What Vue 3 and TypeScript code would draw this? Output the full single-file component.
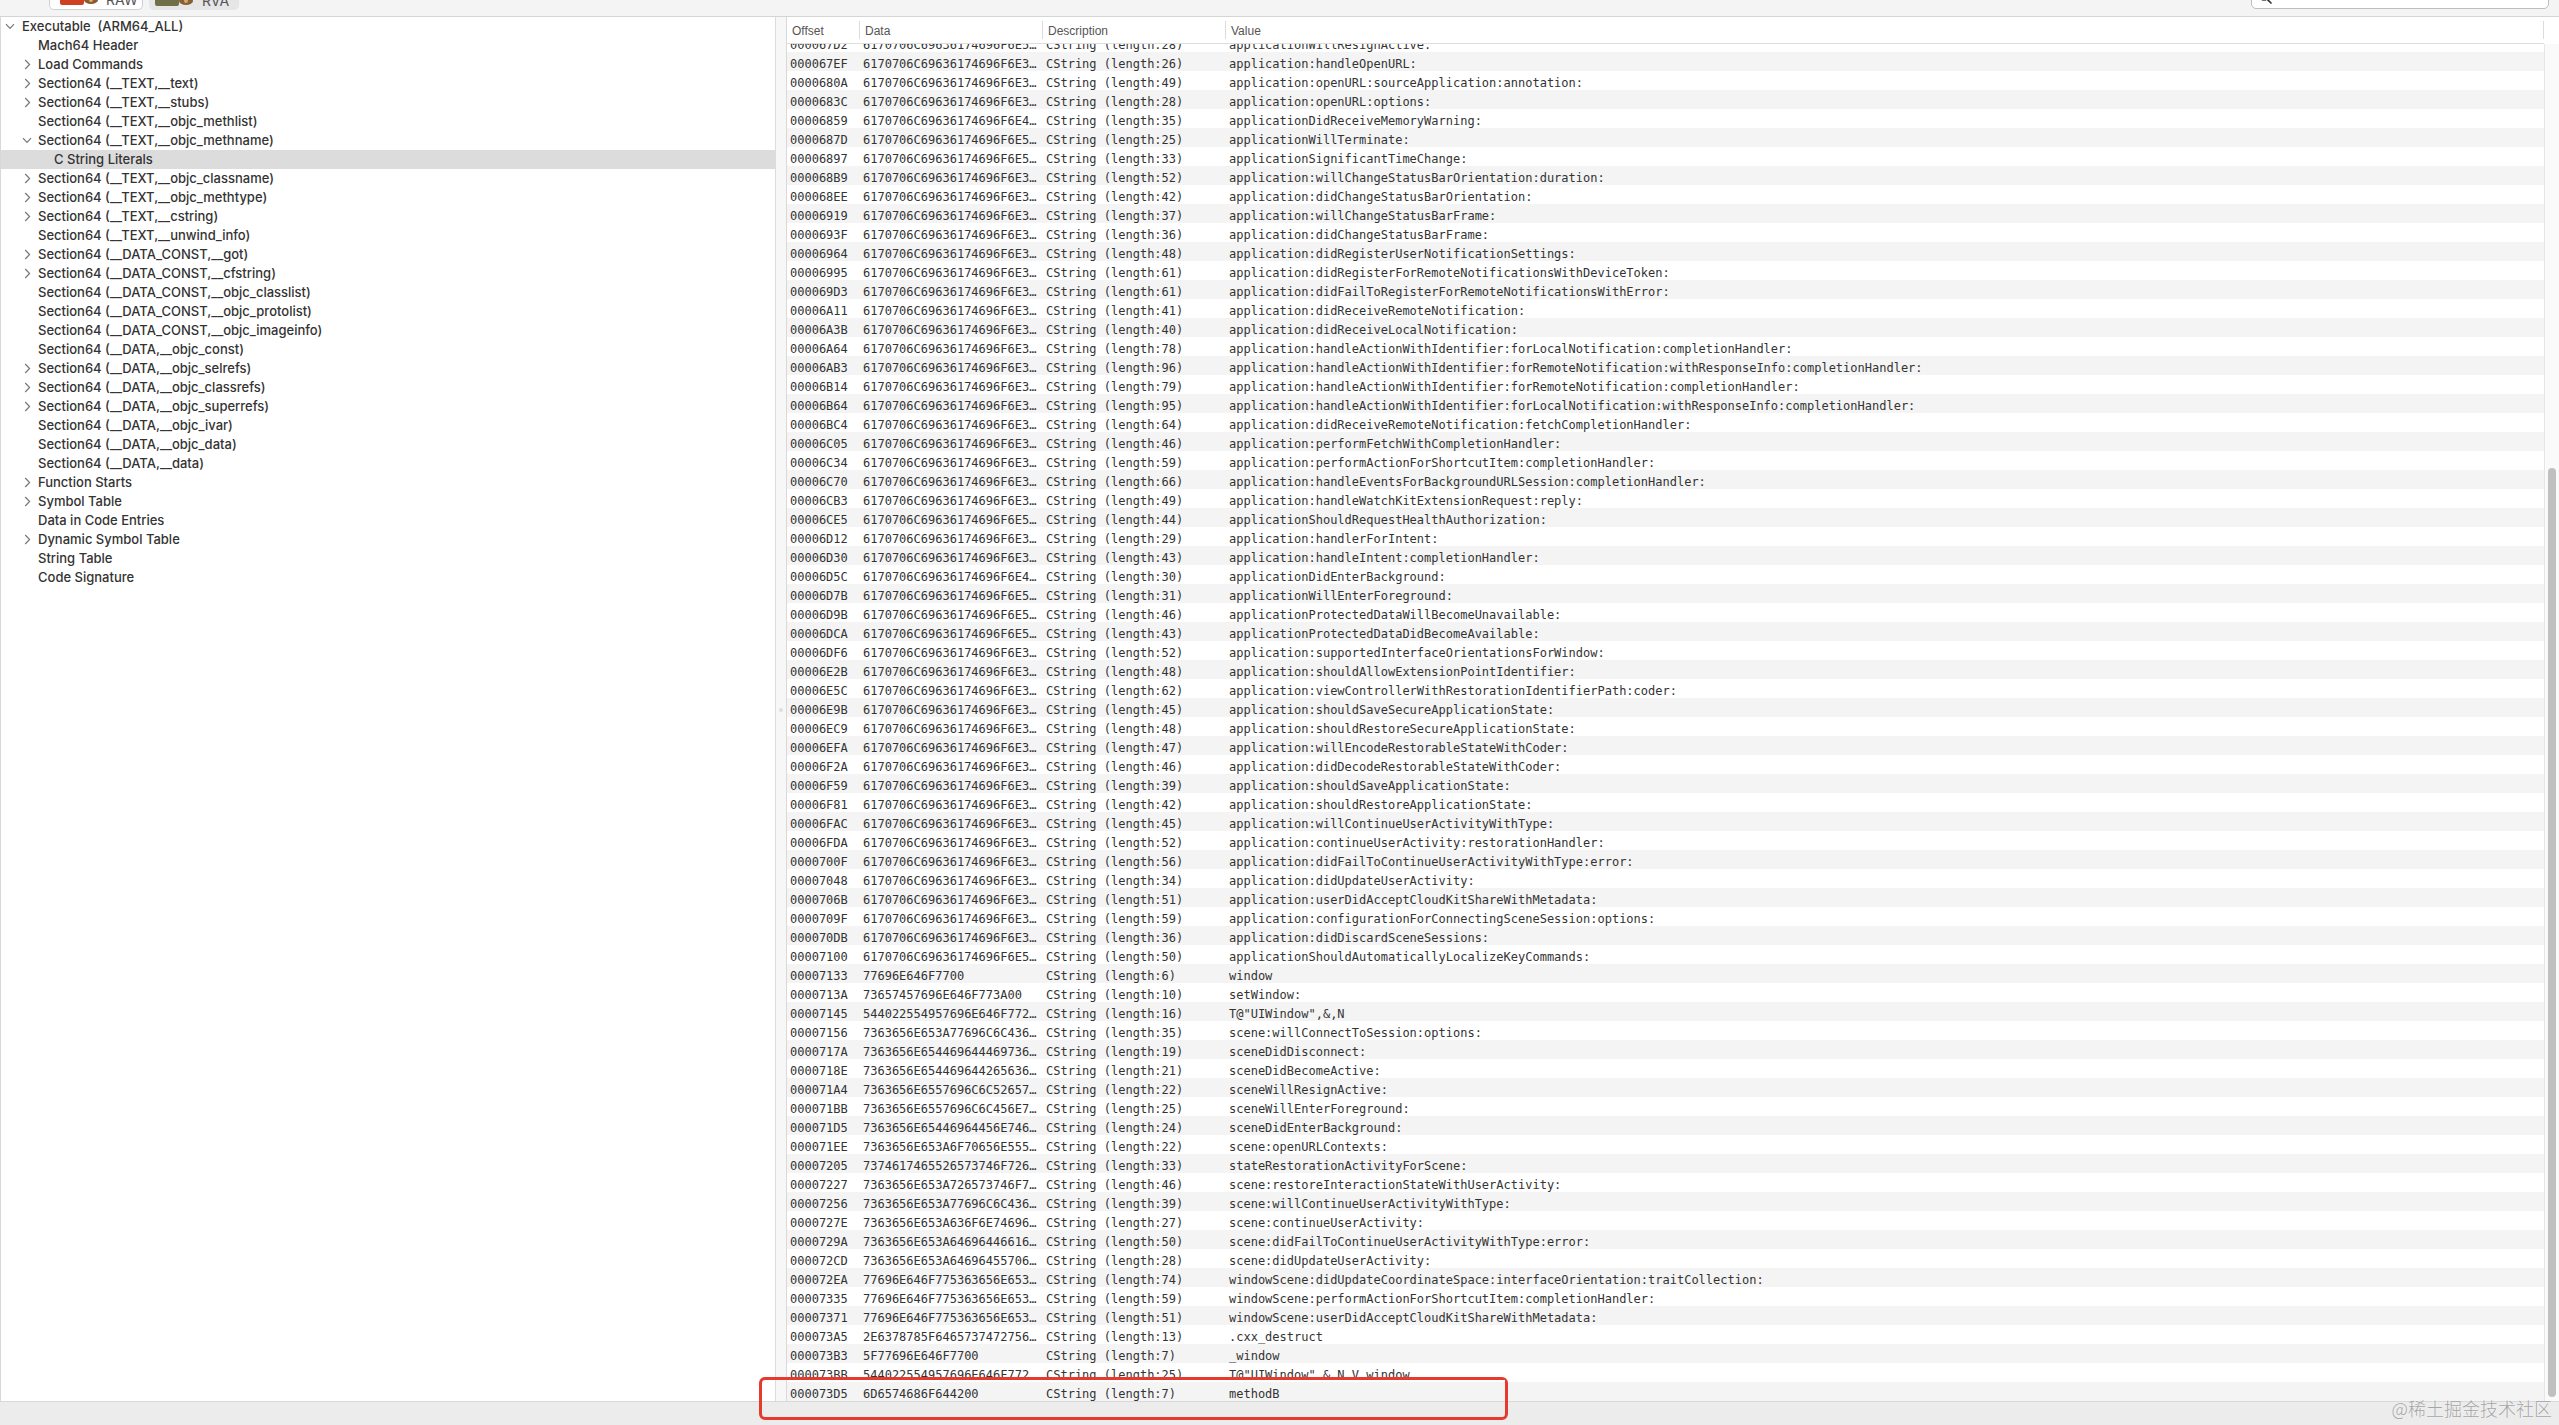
<script setup lang="ts">
interface TreeRow { label: string; depth: number; arrow?: 'right' | 'down'; active?: boolean }

const tree: TreeRow[] = [
  { label: 'Executable  (ARM64_ALL)', depth: 0, arrow: 'down' },
  { label: 'Mach64 Header', depth: 1 },
  { label: 'Load Commands', depth: 1, arrow: 'right' },
  { label: 'Section64 (__TEXT,__text)', depth: 1, arrow: 'right' },
  { label: 'Section64 (__TEXT,__stubs)', depth: 1, arrow: 'right' },
  { label: 'Section64 (__TEXT,__objc_methlist)', depth: 1 },
  { label: 'Section64 (__TEXT,__objc_methname)', depth: 1, arrow: 'down' },
  { label: 'C String Literals', depth: 2, active: true },
  { label: 'Section64 (__TEXT,__objc_classname)', depth: 1, arrow: 'right' },
  { label: 'Section64 (__TEXT,__objc_methtype)', depth: 1, arrow: 'right' },
  { label: 'Section64 (__TEXT,__cstring)', depth: 1, arrow: 'right' },
  { label: 'Section64 (__TEXT,__unwind_info)', depth: 1 },
  { label: 'Section64 (__DATA_CONST,__got)', depth: 1, arrow: 'right' },
  { label: 'Section64 (__DATA_CONST,__cfstring)', depth: 1, arrow: 'right' },
  { label: 'Section64 (__DATA_CONST,__objc_classlist)', depth: 1 },
  { label: 'Section64 (__DATA_CONST,__objc_protolist)', depth: 1 },
  { label: 'Section64 (__DATA_CONST,__objc_imageinfo)', depth: 1 },
  { label: 'Section64 (__DATA,__objc_const)', depth: 1 },
  { label: 'Section64 (__DATA,__objc_selrefs)', depth: 1, arrow: 'right' },
  { label: 'Section64 (__DATA,__objc_classrefs)', depth: 1, arrow: 'right' },
  { label: 'Section64 (__DATA,__objc_superrefs)', depth: 1, arrow: 'right' },
  { label: 'Section64 (__DATA,__objc_ivar)', depth: 1 },
  { label: 'Section64 (__DATA,__objc_data)', depth: 1 },
  { label: 'Section64 (__DATA,__data)', depth: 1 },
  { label: 'Function Starts', depth: 1, arrow: 'right' },
  { label: 'Symbol Table', depth: 1, arrow: 'right' },
  { label: 'Data in Code Entries', depth: 1 },
  { label: 'Dynamic Symbol Table', depth: 1, arrow: 'right' },
  { label: 'String Table', depth: 1 },
  { label: 'Code Signature', depth: 1 },
]

const values: string[] = [
  'applicationWillResignActive:',
  'application:handleOpenURL:',
  'application:openURL:sourceApplication:annotation:',
  'application:openURL:options:',
  'applicationDidReceiveMemoryWarning:',
  'applicationWillTerminate:',
  'applicationSignificantTimeChange:',
  'application:willChangeStatusBarOrientation:duration:',
  'application:didChangeStatusBarOrientation:',
  'application:willChangeStatusBarFrame:',
  'application:didChangeStatusBarFrame:',
  'application:didRegisterUserNotificationSettings:',
  'application:didRegisterForRemoteNotificationsWithDeviceToken:',
  'application:didFailToRegisterForRemoteNotificationsWithError:',
  'application:didReceiveRemoteNotification:',
  'application:didReceiveLocalNotification:',
  'application:handleActionWithIdentifier:forLocalNotification:completionHandler:',
  'application:handleActionWithIdentifier:forRemoteNotification:withResponseInfo:completionHandler:',
  'application:handleActionWithIdentifier:forRemoteNotification:completionHandler:',
  'application:handleActionWithIdentifier:forLocalNotification:withResponseInfo:completionHandler:',
  'application:didReceiveRemoteNotification:fetchCompletionHandler:',
  'application:performFetchWithCompletionHandler:',
  'application:performActionForShortcutItem:completionHandler:',
  'application:handleEventsForBackgroundURLSession:completionHandler:',
  'application:handleWatchKitExtensionRequest:reply:',
  'applicationShouldRequestHealthAuthorization:',
  'application:handlerForIntent:',
  'application:handleIntent:completionHandler:',
  'applicationDidEnterBackground:',
  'applicationWillEnterForeground:',
  'applicationProtectedDataWillBecomeUnavailable:',
  'applicationProtectedDataDidBecomeAvailable:',
  'application:supportedInterfaceOrientationsForWindow:',
  'application:shouldAllowExtensionPointIdentifier:',
  'application:viewControllerWithRestorationIdentifierPath:coder:',
  'application:shouldSaveSecureApplicationState:',
  'application:shouldRestoreSecureApplicationState:',
  'application:willEncodeRestorableStateWithCoder:',
  'application:didDecodeRestorableStateWithCoder:',
  'application:shouldSaveApplicationState:',
  'application:shouldRestoreApplicationState:',
  'application:willContinueUserActivityWithType:',
  'application:continueUserActivity:restorationHandler:',
  'application:didFailToContinueUserActivityWithType:error:',
  'application:didUpdateUserActivity:',
  'application:userDidAcceptCloudKitShareWithMetadata:',
  'application:configurationForConnectingSceneSession:options:',
  'application:didDiscardSceneSessions:',
  'applicationShouldAutomaticallyLocalizeKeyCommands:',
  'window',
  'setWindow:',
  'T@"UIWindow",&,N',
  'scene:willConnectToSession:options:',
  'sceneDidDisconnect:',
  'sceneDidBecomeActive:',
  'sceneWillResignActive:',
  'sceneWillEnterForeground:',
  'sceneDidEnterBackground:',
  'scene:openURLContexts:',
  'stateRestorationActivityForScene:',
  'scene:restoreInteractionStateWithUserActivity:',
  'scene:willContinueUserActivityWithType:',
  'scene:continueUserActivity:',
  'scene:didFailToContinueUserActivityWithType:error:',
  'scene:didUpdateUserActivity:',
  'windowScene:didUpdateCoordinateSpace:interfaceOrientation:traitCollection:',
  'windowScene:performActionForShortcutItem:completionHandler:',
  'windowScene:userDidAcceptCloudKitShareWithMetadata:',
  '.cxx_destruct',
  '_window',
  'T@"UIWindow",&,N,V_window',
  'methodB',
]

function hexOf(s: string): string {
  let out = ''
  for (let i = 0; i < s.length; i++) out += s.charCodeAt(i).toString(16).toUpperCase().padStart(2, '0')
  out += '00'
  return out.length > 24 ? out.slice(0, 23) + '\u2026' : out
}

let cursor = 0x67d2
const rows = values.map((value) => {
  const offset = cursor.toString(16).toUpperCase().padStart(8, '0')
  cursor += value.length + 1
  return { offset, data: hexOf(value), desc: `CString (length:${value.length})`, value }
})

const columns = ['Offset', 'Data', 'Description', 'Value']
</script>

<template>
  <div class="app">
    <header class="toolbar">
      <div class="tabs">
        <div class="tab tab-on">
          <svg class="tab-icon" width="40" height="7" viewBox="0 0 40 7">
            <rect x="1" y="-2" width="24" height="9" rx="2" fill="#cf3f22" />
            <ellipse cx="32" cy="2" rx="7" ry="4" fill="#8a5a32" />
            <circle cx="32" cy="2" r="2" fill="#d8b070" />
          </svg>
          <span class="tab-text">RAW</span>
        </div>
        <div class="tab tab-off">
          <svg class="tab-icon" width="40" height="7" viewBox="0 0 40 7">
            <rect x="0" y="-2" width="24" height="9" rx="2" fill="#6f7048" />
            <ellipse cx="31" cy="2" rx="7" ry="4" fill="#8a5f35" />
            <circle cx="31" cy="2" r="2" fill="#d0a868" />
          </svg>
          <span class="tab-text">RVA</span>
        </div>
      </div>
      <div class="search">
        <svg width="15" height="15" viewBox="0 0 15 15" class="search-icon">
          <circle cx="6" cy="4" r="4.2" fill="none" stroke="#444" stroke-width="1.3" />
          <path d="M9 7.2 L13 11" stroke="#333" stroke-width="1.7" stroke-linecap="round" />
        </svg>
      </div>
    </header>

    <main class="body">
      <nav class="sidebar">
        <div
          v-for="row in tree"
          :key="row.label"
          class="tree-row"
          :class="[`depth-${row.depth}`, { active: row.active }]"
        >
          <span class="arrow">
            <svg v-if="row.arrow === 'right'" width="7" height="11" viewBox="0 0 7 11">
              <path d="M1.2 1 L5.6 5.5 L1.2 10" fill="none" stroke="#777" stroke-width="1.2" />
            </svg>
            <svg v-else-if="row.arrow === 'down'" class="arrow-down" width="10" height="7" viewBox="0 0 10 7">
              <path d="M1 1.2 L5 5.4 L9 1.2" fill="none" stroke="#777" stroke-width="1.2" />
            </svg>
          </span>
          <span class="tree-label">{{ row.label }}</span>
        </div>
      </nav>

      <div class="splitter"><span class="splitter-dot"></span></div>

      <section class="table">
        <div class="thead">
          <div class="head-cols">
            <div v-for="c in columns" :key="c" class="th"><span>{{ c }}</span></div>
          </div>
          <div class="corner"></div>
        </div>
        <div class="scroller">
          <div class="tbody">
            <div class="tbody-inner">
              <div v-for="(r, i) in rows" :key="r.offset" class="tr" :class="{ zebra: i % 2 === 1 }">
                <span class="td">{{ r.offset }}</span>
                <span class="td">{{ r.data }}</span>
                <span class="td">{{ r.desc }}</span>
                <span class="td">{{ r.value }}</span>
              </div>
            </div>
          </div>
          <div class="vbar"><div class="thumb"></div></div>
        </div>
      </section>
    </main>

    <footer class="footer"></footer>

    <div class="callout"></div>
    <div class="watermark">@稀土掘金技术社区</div>
  </div>
</template>

<style>
html, body { margin: 0; padding: 0; background: #fff; }
</style>

<style scoped>
.app {
  position: relative;
  width: 2559px;
  height: 1425px;
  display: flex;
  flex-direction: column;
  overflow: hidden;
  background: #f6f6f6;
}

.toolbar {
  height: 17px;
  flex: none;
  box-sizing: border-box;
  display: flex;
  justify-content: space-between;
  background: #f4f4f4;
  border-bottom: 1px solid #d4d4d4;
  overflow: hidden;
}
.tabs { display: flex; gap: 6px; padding-left: 49px; }
.tab {
  width: 94px;
  height: 20px;
  margin-top: -10px;
  box-sizing: border-box;
  display: flex;
  align-items: flex-end;
  gap: 7px;
  padding: 0 0 4px 9px;
  border-radius: 0 0 5px 5px;
  font: 14px/14px "Inter", "Liberation Sans", sans-serif;
  color: #555;
}
.tab-on { background: #fff; border: 1px solid #d0d0d0; border-top: 0; }
.tab-off { background: #e6e6e6; width: 90px; padding-left: 6px; }
.tab-icon { flex: none; }
.tab-text { line-height: 11px; }
.search {
  width: 298px;
  height: 20px;
  margin: -11px 10px 0 0;
  box-sizing: border-box;
  background: #fff;
  border: 1px solid #bdbdbd;
  border-radius: 5px;
  display: flex;
  align-items: flex-end;
  padding: 0 0 1px 6px;
}
.search-icon { display: block; }

.body { flex: 1; min-height: 0; display: flex; }

.sidebar {
  width: 776px;
  flex: none;
  box-sizing: border-box;
  background: #fff;
  border-left: 1px solid #d8d8d8;
  border-right: 1px solid #dcdcdc;
}
.tree-row {
  height: 19px;
  display: flex;
  align-items: center;
  position: relative;
  color: #333;
  font: 500 13px/19px "Inter", "Liberation Sans", sans-serif;
  white-space: pre;
}
.tree-row.active { background: #dcdcdc; }
.depth-0 { padding-left: 21px; }
.depth-1 { padding-left: 37px; }
.depth-2 { padding-left: 53px; }
.arrow {
  position: absolute;
  top: 0;
  height: 19px;
  display: flex;
  align-items: center;
}
.depth-0 .arrow { left: 4px; }
.depth-1 .arrow { left: 23px; }
.depth-1 .arrow-down { margin-left: -2px; }

.splitter {
  width: 10px;
  flex: none;
  position: relative;
  background: #f7f7f7;
}
.splitter-dot {
  position: absolute;
  left: 3px;
  top: 691px;
  width: 4px;
  height: 4px;
  border-radius: 50%;
  background: #dedede;
}

.table {
  flex: 1;
  min-width: 0;
  display: flex;
  flex-direction: column;
  background: #fff;
  border-left: 1px solid #d9d9d9;
}
.thead {
  height: 27px;
  flex: none;
  box-sizing: border-box;
  display: flex;
  background: #fff;
}
.head-cols {
  flex: 1;
  display: grid;
  grid-template-columns: 72px 183px 183px 1fr;
  align-items: center;
  border-bottom: 1px solid #dedede;
}
.corner { width: 15px; flex: none; }
.th {
  height: 18px;
  box-sizing: border-box;
  padding-left: 5px;
  border-left: 1px solid #dcdcdc;
  font: 12px/20px "Liberation Sans", sans-serif;
  color: #555;
}
.th:first-child { border-left: 0; }
.th:last-child { border-right: 1px solid #dcdcdc; }

.scroller { flex: 1; min-height: 0; display: flex; }
.tbody { flex: 1; min-width: 0; overflow: hidden; }
.tbody-inner { margin-top: -11px; }
.tr {
  height: 19px;
  box-sizing: border-box;
  overflow: hidden;
  display: grid;
  grid-template-columns: 73px 183px 183px 1fr;
  padding: 3px 0 0 3px;
  font: 12px/18px "DejaVu Sans Mono", "Liberation Mono", monospace;
  color: #333;
  white-space: pre;
}
.zebra { background: #f4f4f4; }

.vbar {
  width: 15px;
  flex: none;
  box-sizing: border-box;
  background: #fafafa;
  border-left: 1px solid #e6e6e6;
  display: flex;
  flex-direction: column;
  justify-content: flex-end;
  align-items: center;
  padding-bottom: 4px;
}
.thumb { width: 8px; height: 929px; border-radius: 4px; background: #c0c0c0; }

.footer {
  height: 24px;
  flex: none;
  box-sizing: border-box;
  background: #ececec;
  border-top: 1px solid #d9d9d9;
}

.callout {
  position: absolute;
  left: 759px;
  top: 1377px;
  width: 749px;
  height: 43px;
  box-sizing: border-box;
  border: 3px solid #e53b2e;
  border-radius: 6px;
}
.callout::before {
  content: "";
  position: absolute;
  left: 25px;
  right: 0;
  top: 0;
  height: 2px;
  background: #fff;
}

.watermark {
  position: absolute;
  right: 7px;
  top: 1397px;
  font: 300 18px/22px "Noto Sans CJK SC", sans-serif;
  color: rgba(110, 110, 110, 0.62);
  text-shadow: 0 0 1px rgba(255, 255, 255, 0.7);
  white-space: nowrap;
}
</style>
